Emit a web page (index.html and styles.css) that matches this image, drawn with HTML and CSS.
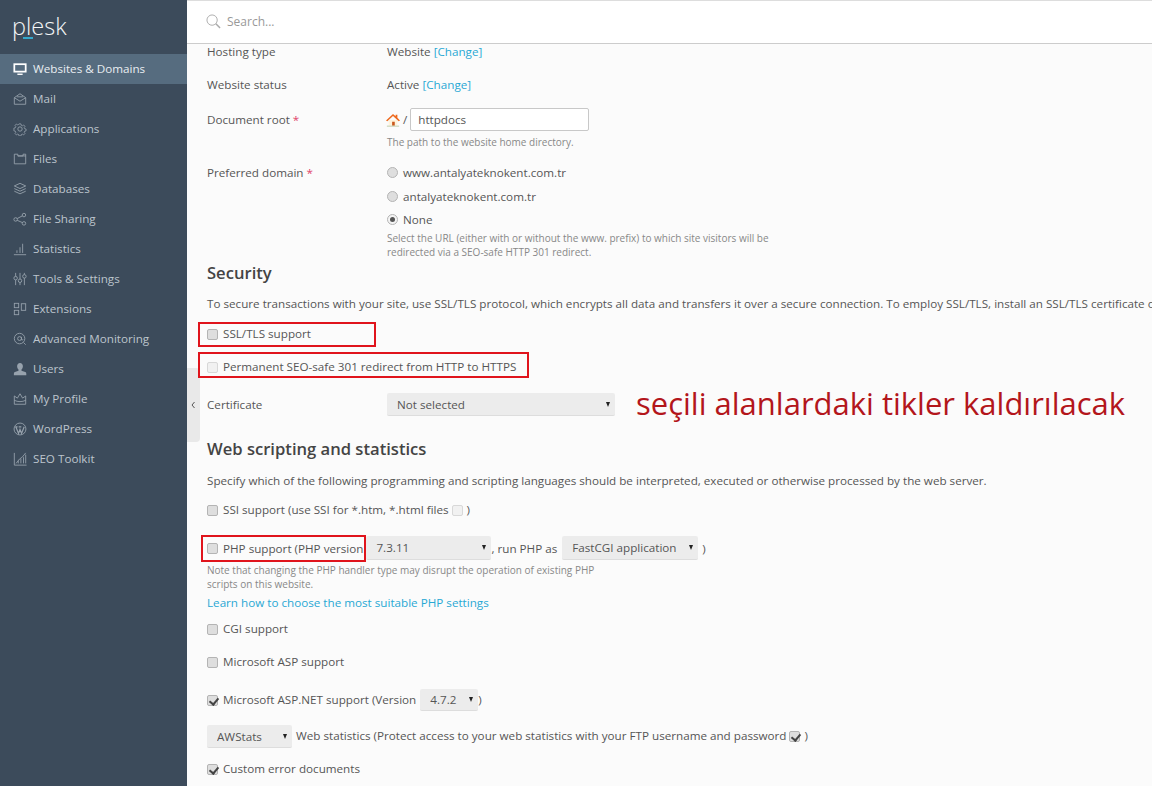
FILE: index.html
```html
<!DOCTYPE html>
<html lang="en">
<head>
    <meta charset="UTF-8">
    <title>Websites &amp; Domains - Plesk</title>
    <link rel="stylesheet" href="styles.css">
</head>
<body>
    <aside class="sidebar">
        <div class="logo"><span class="logo-text">plesk</span><span class="logo-bar"></span></div>
        <nav class="nav">
            <a class="nav-item active"><svg class="icon" viewBox="0 0 16 16"><rect x="1.500" y="2.500" width="13" height="8.500" stroke-width="2"/><path d="M5 14h6" stroke-width="1.600"/></svg><span class="row-text">Websites &amp; Domains</span></a>
            <a class="nav-item"><svg class="icon" viewBox="0 0 16 16"><path d="M1.500 6.500L8 2l6.500 4.500V14h-13zM1.500 6.500L8 10.500l6.500-4M4.500 5.500h7"/></svg><span class="row-text">Mail</span></a>
            <a class="nav-item"><svg class="icon" viewBox="0 0 16 16"><circle cx="8" cy="8" r="2.500"/><path d="M6.800 1.500h2.400l.4 1.800 1.400.6 1.600-1 1.700 1.700-1 1.600.6 1.400 1.800.4v2.400l-1.800.4-.6 1.400 1 1.600-1.700 1.700-1.600-1-1.400.6-.4 1.800H6.800l-.4-1.800-1.400-.6-1.600 1-1.700-1.700 1-1.600-.6-1.400-1.800-.4V6.800l1.800-.4.6-1.400-1-1.600 1.700-1.700 1.600 1 1.400-.6z" transform="translate(.8 .8) scale(.9)"/></svg><span class="row-text">Applications</span></a>
            <a class="nav-item"><svg class="icon" viewBox="0 0 16 16"><path d="M1.500 2.500h4v2h6v-2h3v11h-13zM5.500 4.500h9"/></svg><span class="row-text">Files</span></a>
            <a class="nav-item"><svg class="icon" viewBox="0 0 16 16"><path d="M8 1.500l6.500 3L8 7.500l-6.500-3zM1.500 7.500L8 10.500l6.500-3M1.500 10.500L8 13.500l6.500-3"/></svg><span class="row-text">Databases</span></a>
            <a class="nav-item"><svg class="icon" viewBox="0 0 16 16"><circle cx="3" cy="8.500" r="2"/><circle cx="12.500" cy="3.500" r="2"/><circle cx="12.500" cy="13" r="2"/><path d="M4.800 7.500l5.900-3.100M4.800 9.500l5.900 2.600"/></svg><span class="row-text">File Sharing</span></a>
            <a class="nav-item"><svg class="icon" viewBox="0 0 16 16"><path d="M1 14.500h14M4.500 12.500v-3M8 12.500V6M11 12.500V2"/></svg><span class="row-text">Statistics</span></a>
            <a class="nav-item"><svg class="icon" viewBox="0 0 16 16"><path d="M3 1v4M3 9v6M8 1v7M8 12v3M13 1v2M13 7v8"/><circle cx="3" cy="7" r="2"/><circle cx="8" cy="10" r="2"/><circle cx="13" cy="5" r="2"/></svg><span class="row-text">Tools &amp; Settings</span></a>
            <a class="nav-item"><svg class="icon" viewBox="0 0 16 16"><rect x="1.500" y="1.500" width="5" height="5"/><rect x="1.500" y="9.500" width="5" height="5"/><rect x="9.500" y="2" width="5" height="7.500"/></svg><span class="row-text">Extensions</span></a>
            <a class="nav-item"><svg class="icon" viewBox="0 0 16 16"><circle cx="7.500" cy="7.500" r="6"/><circle cx="7.500" cy="7.500" r="2.200"/><path d="M9.700 5.500v3.200c0 1 1.500 1 1.500-.6M12 12l2.500 2.500"/></svg><span class="row-text">Advanced Monitoring</span></a>
            <a class="nav-item"><svg class="icon icon-solid" viewBox="0 0 16 16"><path d="M8 1c2 0 3.300 1.600 3.300 3.800 0 1.700-.8 3-1.600 3.800v1.300l4.300 1.600c.8.300 1.200 1 1.200 1.800V15H1v-1.700c0-.8.400-1.500 1.200-1.800l4.100-1.600V8.600c-.8-.8-1.600-2.100-1.600-3.800C4.700 2.600 6 1 8 1z"/></svg><span class="row-text">Users</span></a>
            <a class="nav-item"><svg class="icon" viewBox="0 0 16 16"><path d="M1.500 4.500L5 7l3-5 3 5 3.500-2.500v9.500h-13zM1.500 9.500c4 2 9 2 13 0"/></svg><span class="row-text">My Profile</span></a>
            <a class="nav-item"><svg class="icon" viewBox="0 0 16 16"><circle cx="8" cy="8" r="6.800"/><path d="M3.200 5.500L6.300 13 8 8.500 9.800 13l3-7.500M2.500 5.500h2.700M6.500 5.500h3" stroke-width="1.400"/></svg><span class="row-text">WordPress</span></a>
            <a class="nav-item"><svg class="icon" viewBox="0 0 16 16"><path d="M1.500 1v14h14M3.500 13l4-5 3-2 4-5M6 13v-3M9 13V8M12 13V6M14.500 13V3"/></svg><span class="row-text">SEO Toolkit</span></a>
        </nav>
    </aside>

    <button class="collapse" type="button" aria-label="Collapse"><svg viewBox="0 0 8 10"><path d="M5.500 2L3 5l2.500 3"/></svg></button>

    <div class="main">
        <header class="topbar">
            <svg class="search-icon" viewBox="0 0 16 16"><circle cx="6.500" cy="6.500" r="5.500"/><path d="M10.500 10.500l4.500 4.500" stroke-width="1.600"/></svg>
            <span class="search-text">Search...</span>
        </header>

        <main class="content">
            <div class="field field-hosting">
                <div class="field-label">Hosting type</div>
                <div>Website <a class="link">[Change]</a></div>
            </div>
            <div class="field field-status">
                <div class="field-label">Website status</div>
                <div>Active <a class="link">[Change]</a></div>
            </div>
            <div class="field field-root">
                <div class="field-label">Document root <span class="req">*</span></div>
                <div>
                    <div class="root-line">
                        <svg class="home" viewBox="0 0 16 16"><path class="home-body" d="M3 8h10v6.500H3z"/><path class="home-door" d="M7 10h3v4.500H7z"/><path class="home-roof" d="M0 8.500L8 1l3 2.700V2h2v3.500l3 3-1.500 1L8 3.500 1.500 9.500z"/><path class="home-base" d="M1 14.500h14v1H1z"/></svg>
                        <span class="slash">/</span>
                        <input class="text-input" type="text" value="httpdocs">
                    </div>
                    <div class="hint hint-root">The path to the website home directory.</div>
                </div>
            </div>
            <div class="field field-domain">
                <div class="field-label">Preferred domain <span class="req">*</span></div>
                <div>
                    <label class="radio-row"><input type="radio" name="domain">www.antalyateknokent.com.tr</label>
                    <label class="radio-row"><input type="radio" name="domain">antalyateknokent.com.tr</label>
                    <label class="radio-row radio-last"><input type="radio" name="domain" checked>None</label>
                    <div class="hint hint-domain">Select the URL (either with or without the www. prefix) to which site visitors will be redirected via a SEO-safe HTTP 301 redirect.</div>
                </div>
            </div>

            <h2 class="section-title title-security">Security</h2>
            <p class="section-text text-security">To secure transactions with your site, use SSL/TLS protocol, which encrypts all data and transfers it over a secure connection. To employ SSL/TLS, install an SSL/TLS certificate on</p>
            <label class="check-row row-ssl"><input type="checkbox"><span class="row-text">SSL/TLS support</span><span class="mark mark-ssl"></span></label>
            <label class="check-row row-redirect"><input type="checkbox" class="faded"><span class="row-text">Permanent SEO-safe 301 redirect from HTTP to HTTPS</span><span class="mark mark-redirect"></span></label>
            <div class="field field-cert">
                <div class="field-label">Certificate</div>
                <span class="select select-cert"><select><option>Not selected</option></select></span>
                <span class="annotation">seçili alanlardaki tikler kaldırılacak</span>
            </div>

            <h2 class="section-title title-web">Web scripting and statistics</h2>
            <p class="section-text text-web">Specify which of the following programming and scripting languages should be interpreted, executed or otherwise processed by the web server.</p>
            <label class="check-row row-ssi"><input type="checkbox"><span class="row-text">SSI support (use SSI for *.htm, *.html files</span><input type="checkbox" class="faded inline-check"><span class="row-text">)</span></label>
            <div class="check-row row-php">
                <input type="checkbox">PHP support (PHP version
                <span class="select select-php"><select><option>7.3.11</option></select></span><span class="after-select">, run PHP as</span>
                <span class="select select-handler"><select><option>FastCGI application</option></select></span><span class="after-close">)</span>
                <span class="mark mark-php"></span>
            </div>
            <div class="hint hint-php">Note that changing the PHP handler type may disrupt the operation of existing PHP scripts on this website.</div>
            <a class="link learn">Learn how to choose the most suitable PHP settings</a>
            <label class="check-row row-cgi"><input type="checkbox"><span class="row-text">CGI support</span></label>
            <label class="check-row row-asp"><input type="checkbox"><span class="row-text">Microsoft ASP support</span></label>
            <div class="check-row row-aspnet">
                <input type="checkbox" checked><span class="row-text">Microsoft ASP.NET support (Version</span>
                <span class="select select-net"><select><option>4.7.2</option></select></span><span class="row-text">)</span>
            </div>
            <div class="check-row row-stats">
                <span class="select select-stats"><select><option>AWStats</option></select></span>
                <span class="row-text stats-text">Web statistics (Protect access to your web statistics with your FTP username and password</span><input type="checkbox" class="inline-check" checked><span class="row-text">)</span>
            </div>
            <label class="check-row row-errors"><input type="checkbox" checked><span class="row-text">Custom error documents</span></label>
        </main>
    </div>
</body>
</html>
```

FILE: styles.css
```css
* {
    box-sizing: border-box;
}

html, body {
    height: 100%;
}

body {
    margin: 0;
    display: flex;
    height: 786px;
    overflow: hidden;
    font-family: "Open Sans", sans-serif;
    font-size: 11.67px;
    line-height: 15px;
    color: #555;
    background: #fbfbfb;
}

/* nudges the text one pixel up against the icon or box next to it */
.row-text {
    margin-bottom: 2px;
}

/* sidebar */
.sidebar {
    flex: 0 0 187px;
    background: #3c4b5b;
    color: #bdc5cd;
}

.logo {
    position: relative;
    height: 54px;
    padding: 10px 0 0 12px;
}

.logo-text {
    font-family: "Open Sans", sans-serif;
    font-weight: 300;
    font-size: 23.5px;
    line-height: 32px;
    color: #f4f6f7;
}

.logo-bar {
    position: absolute;
    left: 23px;
    top: 37px;
    width: 10px;
    height: 2px;
    background: #35a8cc;
}

.nav-item {
    display: flex;
    align-items: center;
    gap: 6px;
    height: 30px;
    padding-left: 13px;
    font-weight: 500;
}

.nav-item.active {
    background: #566c7f;
    color: #e9eef2;
}

.icon {
    flex: none;
    width: 14px;
    height: 14px;
    fill: none;
    stroke: #97a2ad;
    stroke-width: 1;
}

.active .icon {
    stroke: #fff;
}

.icon-solid {
    fill: #97a2ad;
    stroke: none;
}

.collapse {
    position: absolute;
    left: 187px;
    top: 368px;
    width: 13px;
    height: 74px;
    padding: 0;
    border: 0;
    border-radius: 0 4px 4px 0;
    background: #e9e9e9;
}

.collapse svg {
    display: block;
    width: 8px;
    height: 10px;
    margin-left: 2px;
    fill: none;
    stroke: #555;
}

/* top bar */
.main {
    flex: 1;
    min-width: 0;
}

.topbar {
    display: flex;
    align-items: center;
    height: 44px;
    padding: 0 0 2px 19px;
    background: #fff;
    border-top: 1px solid #ddd;
    border-bottom: 1px solid #ccc;
}

.search-icon {
    width: 15px;
    height: 15px;
    fill: none;
    stroke: #aaa;
}

.search-text {
    margin-left: 6px;
    font-size: 12px;
    color: #999;
}

/* form */
.content {
    padding: 1px 0 0 20px;
    white-space: nowrap;
}

.field {
    display: flex;
}

.field-label {
    flex: 0 0 180px;
}

.field-hosting {
    height: 14px;
    line-height: 14px;
}

.field-status {
    height: 20px;
    margin-top: 16px;
    line-height: 20px;
}

.field-root {
    margin-top: 13px;
}

.field-root .field-label {
    line-height: 24px;
}

.field-domain {
    margin-top: 11px;
}

.field-domain .field-label {
    line-height: 26px;
}

.req {
    color: #e0446a;
}

.link {
    color: #28a8d4;
}

.root-line {
    display: flex;
    align-items: center;
    margin-left: -1px;
}

.home {
    width: 14px;
    height: 14px;
}

.home-body {
    fill: #fff3dc;
}

.home-door {
    fill: #c9571b;
}

.home-roof {
    fill: #ee6a1f;
}

.home-base {
    fill: #b9c7a0;
}

.slash {
    margin: 0 3px 0 3px;
}

.text-input {
    width: 179px;
    height: 23px;
    padding: 0 7px;
    font: inherit;
    color: #555;
    background: #fff;
    border: 1px solid #c8c8c8;
    border-radius: 2px;
}

.hint {
    font-size: 10px;
    line-height: 14px;
    color: #888;
    white-space: normal;
}

.hint-root {
    margin-top: 4px;
}

.hint-domain {
    width: 400px;
    margin-top: 1px;
}

.hint-php {
    width: 400px;
    margin-top: 3px;
}

.radio-row {
    display: flex;
    align-items: center;
    height: 24px;
}

.radio-last {
    height: 22px;
}

input[type="radio"],
input[type="checkbox"] {
    appearance: none;
    position: relative;
    flex: none;
    width: 11px;
    height: 11px;
    margin: 0 5px 0 0;
    background: #dedede;
    border: 1px solid #b4b4b4;
}

input[type="radio"] {
    border-radius: 50%;
}

input[type="radio"]:checked {
    background: #f4f4f4;
}

input[type="radio"]:checked::after {
    content: "";
    position: absolute;
    left: 2px;
    top: 2px;
    width: 5px;
    height: 5px;
    border-radius: 50%;
    background: #555;
}

input[type="checkbox"] {
    border-radius: 2px;
}

input[type="checkbox"]:checked::after {
    content: "";
    position: absolute;
    left: 3px;
    top: 0;
    width: 4px;
    height: 7px;
    border: solid #444;
    border-width: 0 2px 2px 0;
    transform: rotate(40deg);
}

input.faded {
    background: #f1f1f1;
    border-color: #d8d8d8;
}

.inline-check {
    margin: 0 4px 0 3px !important;
}

.section-title {
    height: 28px;
    margin: 0;
    font-size: 16.6px;
    font-weight: 600;
    line-height: 28px;
    color: #444;
}

.title-web {
    margin-top: 19px;
}

.section-text {
    height: 18px;
    margin: 0;
    line-height: 17px;
}

.text-security {
    margin-top: 8px;
}

.text-web {
    margin-top: 9px;
}

.check-row {
    position: relative;
    display: flex;
    align-items: center;
    height: 22px;
}

.row-ssl {
    margin-top: 10px;
}

.row-redirect {
    margin-top: 11px;
}

.row-ssi {
    margin-top: 9px;
}

.row-php {
    height: 24px;
    margin-top: 15px;
}

.row-cgi {
    margin-top: 6px;
}

.row-asp {
    margin-top: 11px;
}

.row-aspnet {
    margin-top: 16px;
}

.row-stats {
    height: 23px;
    margin-top: 14px;
}

.row-errors {
    margin-top: 10px;
}

.field-cert {
    align-items: center;
    height: 23px;
    margin-top: 15px;
}

.annotation {
    margin: -2px 0 0 21px;
    font-size: 31px;
    line-height: 23px;
    color: #b3161b;
}

.learn {
    display: block;
    height: 18px;
    margin-top: 3px;
    line-height: 18px;
}

/* red highlight boxes drawn over the rows */
.mark {
    position: absolute;
    border: 2px solid #e0141c;
    pointer-events: none;
}

.mark-ssl {
    left: -9px;
    top: -1px;
    width: 178px;
    height: 25px;
}

.mark-redirect {
    left: -9px;
    top: -4px;
    width: 331px;
    height: 26px;
}

.mark-php {
    left: -6px;
    top: -1px;
    width: 165px;
    height: 27px;
}

/* selects */
.select {
    position: relative;
    display: inline-block;
    flex: none;
    height: 100%;
}

.select select {
    appearance: none;
    display: block;
    width: 100%;
    height: 100%;
    padding: 0 0 0 10px;
    font: inherit;
    color: #555;
    background: #ececec;
    border: 0;
    border-bottom: 1px solid #ddd;
    border-radius: 2px;
}

.select::after {
    content: "";
    position: absolute;
    right: 5px;
    top: 50%;
    margin-top: -3px;
    border: solid transparent;
    border-width: 5px 2.500px 0;
    border-top-color: #222;
}

.select-cert {
    width: 228px;
}

.select-php {
    width: 125px;
    margin-left: 3px;
}

.after-select {
    margin-right: 5px;
}

.select-handler {
    width: 136px;
}

.after-close {
    margin-left: 4px;
}

.select-net {
    width: 58px;
    margin-left: 4px;
}

.select-stats {
    width: 85px;
}

.stats-text {
    margin-left: 4px;
}
```
